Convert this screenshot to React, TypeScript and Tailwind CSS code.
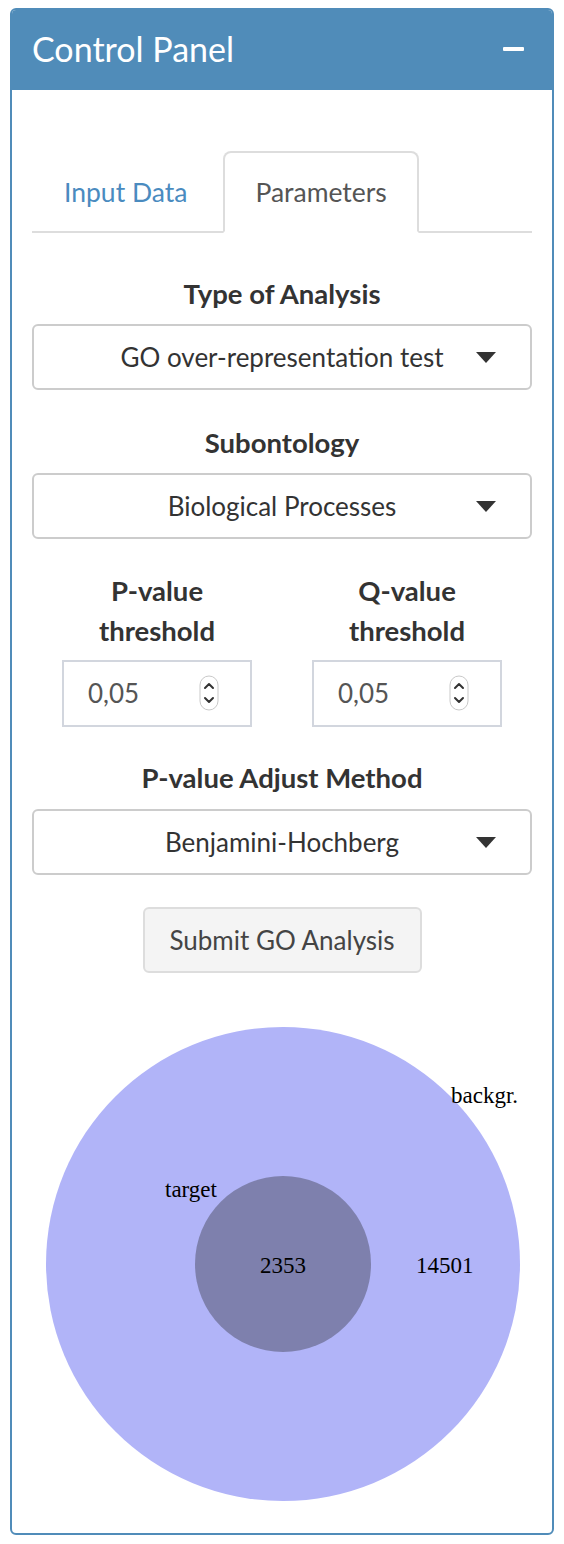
import React from "react";

const font = { fontFamily: "Lato, 'Noto Sans', sans-serif" } as const;

function Caret() {
  return (
    <svg width="20" height="11" viewBox="0 0 20 11" className="shrink-0">
      <polygon points="0,0 20,0 10,11" fill="#333" />
    </svg>
  );
}

function Select({ value }: { value: string }) {
  return (
    <div className="relative h-[66px] w-full rounded-[6px] border-2 border-[#cccccc] bg-white flex items-center justify-center">
      <span className="text-[26px] text-[#333]">{value}</span>
      <div className="absolute right-[34px] top-[26px] flex">
        <Caret />
      </div>
    </div>
  );
}

function Label({ children }: { children: React.ReactNode }) {
  return <div className="text-center text-[27.5px] font-bold leading-[40px] text-[#333]">{children}</div>;
}

function Spinner() {
  return (
    <svg width="21" height="37" viewBox="0 0 21 37">
      <rect x="1" y="1" width="18" height="34" rx="9" fill="#fff" stroke="#c9c9c9" strokeWidth="1" />
      <path d="M6 13 L10 9 L14 13" fill="none" stroke="#333" strokeWidth="2" strokeLinecap="round" strokeLinejoin="round" />
      <path d="M6 23 L10 27 L14 23" fill="none" stroke="#333" strokeWidth="2" strokeLinecap="round" strokeLinejoin="round" />
    </svg>
  );
}

function NumberInput() {
  return (
    <div className="h-[67px] w-[190px] border-2 border-[#d2d6de] bg-white flex items-center pl-[24px] pr-[30px] justify-between">
      <span className="text-[26px] text-[#555]">0,05</span>
      <Spinner />
    </div>
  );
}

export default function App() {
  return (
    <div className="w-[564px] h-[1544px] bg-white pt-[8px] px-[10px]" style={font}>
      <div className="h-[1527px] rounded-[6px] border-2 border-[#508cb9] bg-white overflow-hidden flex flex-col">
        <div className="h-[80px] bg-[#508cb9] flex items-center justify-between pl-[20px] pr-[28px]">
          <span className="text-[34px] text-white leading-none -mt-[3px]">Control Panel</span>
          <div className="h-[4px] w-[21px] bg-white rounded-[1px] -mt-[2px]" />
        </div>
        <div className="px-[20px] pt-[61px] flex flex-col">
          <div className="flex border-b-2 border-[#dddddd]">
            <div className="-mb-[2px] mr-[4px] px-[30px] pt-[19px] pb-[19px] leading-[40px] text-[26.5px] text-[#4a8bbf] border-2 border-transparent">
              Input Data
            </div>
            <div className="-mb-[2px] px-[30px] pt-[19px] pb-[19px] leading-[40px] text-[26.5px] text-[#555] bg-white border-2 border-b-transparent border-[#dddddd] rounded-t-[8px]">
              Parameters
            </div>
          </div>

          <div className="mt-[41px]">
            <Label>Type of Analysis</Label>
          </div>
          <div className="mt-[10px]">
            <Select value="GO over-representation test" />
          </div>

          <div className="mt-[33px]">
            <Label>Subontology</Label>
          </div>
          <div className="mt-[10px]">
            <Select value="Biological Processes" />
          </div>

          <div className="mt-[32px] grid grid-cols-2">
            <div className="flex flex-col items-center">
              <Label>
                P-value
                <br />
                threshold
              </Label>
              <div className="mt-[9px]">
                <NumberInput />
              </div>
            </div>
            <div className="flex flex-col items-center">
              <Label>
                Q-value
                <br />
                threshold
              </Label>
              <div className="mt-[9px]">
                <NumberInput />
              </div>
            </div>
          </div>

          <div className="mt-[31px]">
            <Label>P-value Adjust Method</Label>
          </div>
          <div className="mt-[11px]">
            <Select value="Benjamini-Hochberg" />
          </div>

          <div className="mt-[32px] flex justify-center">
            <div className="h-[66px] w-[279px] rounded-[6px] border-2 border-[#dddddd] bg-[#f4f4f4] flex items-center justify-center text-[26px] text-[#444]">
              Submit GO Analysis
            </div>
          </div>

          <div className="mt-[54px]">
            <svg width="500" height="480" viewBox="0 0 500 480" style={{ fontFamily: "'Liberation Serif', serif" }}>
              <circle cx="251" cy="237" r="237" fill="#b1b4f8" />
              <circle cx="251" cy="237" r="88" fill="#7e80ad" />
              <text x="419" y="76" fontSize="23" fill="#000">backgr.</text>
              <text x="133" y="170" fontSize="23" fill="#000">target</text>
              <text x="251" y="246" fontSize="23" fill="#000" textAnchor="middle">2353</text>
              <text x="384" y="246" fontSize="23" fill="#000">14501</text>
            </svg>
          </div>
        </div>
      </div>
    </div>
  );
}
